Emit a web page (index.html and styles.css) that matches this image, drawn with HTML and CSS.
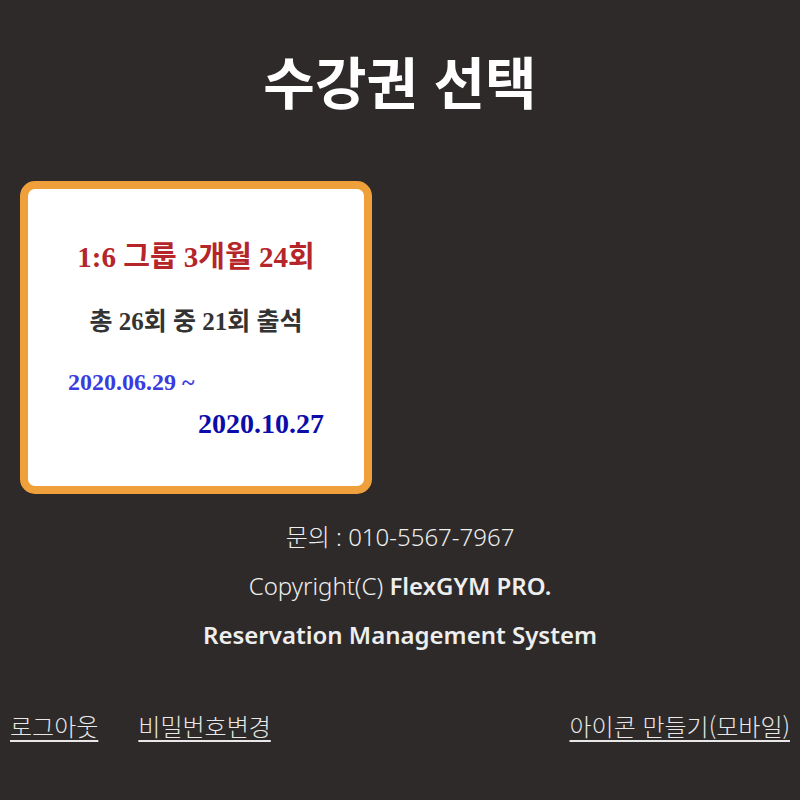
FILE: index.html
```html
<!DOCTYPE html>
<html lang="ko">
<head>
<meta charset="utf-8">
<title>수강권 선택</title>
<link rel="stylesheet" href="styles.css">
</head>
<body>
<h1 class="title">수강권 선택</h1>
<div class="card">
  <div class="pass">1:6 그룹 3개월 24회</div>
  <div class="count">총 26회 중 21회 출석</div>
  <div class="start">2020.06.29 ~</div>
  <div class="end">2020.10.27</div>
</div>
<div class="footer">
  <p class="line light">문의 : 010-5567-7967</p>
  <p class="line"><span class="light">Copyright(C) </span><span class="bold">FlexGYM PRO.</span></p>
  <p class="line bold">Reservation Management System</p>
</div>
<div class="links">
  <div class="left-links">
    <a href="#" class="link">로그아웃</a>
    <a href="#" class="link">비밀번호변경</a>
  </div>
  <a href="#" class="link">아이콘 만들기(모바일)</a>
</div>
</body>
</html>
```
FILE: styles.css
```css
html, body {
  margin: 0;
  padding: 0;
}
body {
  background: #2d2a29;
  font-family: "Noto Sans", "Noto Sans CJK KR", sans-serif;
  color: #eeeeee;
  width: 800px;
  height: 800px;
  overflow: hidden;
}
.title {
  margin: 0;
  padding-top: 47px;
  font-family: "Noto Sans CJK KR", sans-serif;
  font-size: 56px;
  line-height: 66px;
  font-weight: 700;
  color: #ffffff;
  text-align: center;
}
.card {
  margin: 68px 0 0 20px;
  width: 352px;
  height: 313px;
  box-sizing: border-box;
  border: 8px solid #f0a03a;
  border-radius: 15px;
  background: #ffffff;
  font-family: "Liberation Serif", "Noto Sans CJK KR", serif;
  font-weight: 700;
  padding-top: 50px;
}
.pass {
  font-size: 29px;
  line-height: 36px;
  color: #b5262a;
  text-align: center;
}
.count {
  margin-top: 32px;
  font-size: 25px;
  line-height: 30px;
  color: #333333;
  text-align: center;
}
.start {
  margin-top: 30px;
  padding-left: 40px;
  font-size: 24px;
  line-height: 30px;
  color: #3b3be0;
}
.end {
  margin-top: 10px;
  padding-right: 40px;
  font-size: 28px;
  line-height: 34px;
  color: #0c0caa;
  text-align: right;
}
.footer {
  margin-top: 18px;
  text-align: center;
  font-size: 24px;
}
.line {
  margin: 0;
  line-height: 49px;
}
.light {
  font-weight: 300;
}
.bold {
  font-weight: 600;
}
.links {
  margin-top: 52px;
  padding: 0 10px;
  display: flex;
  justify-content: space-between;
  align-items: center;
  line-height: 30px;
}
.left-links {
  display: flex;
  gap: 40px;
}
.link {
  font-family: "Noto Sans CJK KR", sans-serif;
  font-size: 24px;
  font-weight: 300;
  color: #e8e8e8;
  text-decoration: underline;
  text-underline-offset: 4px;
}
```
